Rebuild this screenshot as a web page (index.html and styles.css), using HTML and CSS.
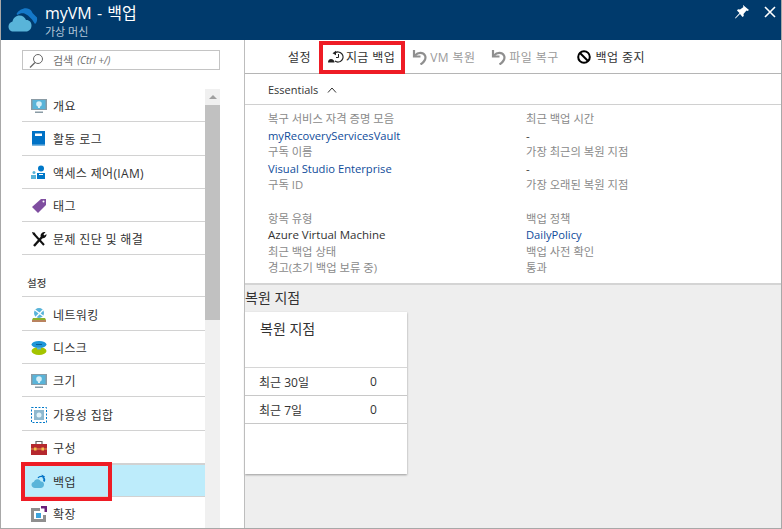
FILE: index.html
```html
<!DOCTYPE html>
<html lang="ko">
<head>
  <meta charset="UTF-8">
  <title>myVM - 백업</title>
  <link rel="stylesheet" href="styles.css">
</head>
<body>
  <div class="app">
    <header class="titlebar">
      <svg class="logo" width="30" height="26" viewBox="0 0 30 26">
        <path d="M8.500 7C11 2.500 17 0 21 2c2 1 3 2.500 3.500 4l4.500 4.500c.5 3-.5 5.500-2 6.500l-3-4.500-4-4-3.500-2c-2.500-.5-5 0-7 1.500z" fill="#1478c8"/>
        <path d="M5.500 24.500C2.500 24.500.5 22.500.5 19.500c0-2.500 1.800-4.500 4-5 .8-3.500 3.500-6 7-6 3 0 5.500 1.800 6.500 4.500 3-.3 5.500 2 5.500 5.500 0 3.500-2.500 6-5.500 6z" fill="#59b4d9"/>
      </svg>
      <div class="title-text">
        <div class="title">myVM - 백업</div>
        <div class="subtitle">가상 머신</div>
      </div>
      <div class="window-btns">
        <svg width="14" height="14" viewBox="0 0 14 14"><path d="M8 0l6 5-1.500 1-1-.5L8.500 9l.3 2-1.300 1-2.500-3-4.500 4.500-.5-.5L4.500 8 2 5.500l1-1.300 2 .3L8.500 2 8 1z" fill="#fff"/></svg>
        <svg width="12" height="12" viewBox="0 0 12 12"><path d="M1 1l10 10M11 1L1 11" stroke="#fff" stroke-width="1.600"/></svg>
      </div>
    </header>

    <div class="main">
      <aside class="sidebar">
        <div class="search">
          <svg width="15" height="15" viewBox="0 0 15 15"><circle cx="9" cy="6" r="4.500" fill="none" stroke="#666" stroke-width="1"/><path d="M6 9.500L1 14.500" stroke="#666" stroke-width="1.200"/></svg>
          <span class="search-ko">검색</span> <em>(Ctrl +/)</em>
        </div>
        <div class="menu-wrap">
          <nav class="menu">
            <div class="item">
              <svg class="ico" viewBox="0 0 16 16"><rect x="0" y="1" width="16" height="11" fill="#8a9ba5"/><rect x="1.500" y="2" width="13" height="9" fill="#59b4d9"/><circle cx="8" cy="6" r="2.800" fill="#d8f0f8"/><rect x="7" y="6" width="2" height="4" fill="#d8f0f8"/><rect x="4" y="13.500" width="8" height="1.500" fill="#8a9ba5"/></svg>
              개요
            </div>
            <div class="item">
              <svg class="ico" viewBox="0 0 16 16"><rect x="1" y="0" width="13" height="15" fill="#0072c6"/><rect x="1" y="13.500" width="13" height="1.500" fill="#7fb8e0"/><rect x="4" y="2.500" width="7" height="2.500" fill="#fff"/></svg>
              활동 로그
            </div>
            <div class="item">
              <svg class="ico" viewBox="0 0 16 16"><circle cx="10" cy="3.500" r="3" fill="#0078c8"/><path d="M6 14V8h8v6z" fill="#0078c8"/><circle cx="3" cy="7.500" r="1.500" fill="#59b4d9"/><path d="M0 14v-4h5v4z" fill="#59b4d9"/><path d="M8 9h4v1H8z" fill="#fff"/></svg>
              액세스 제어(IAM)
            </div>
            <div class="item">
              <svg class="ico" viewBox="0 0 16 16"><path d="M10 1h5v6l-8 8-6-6z" fill="#7f4ea0"/><circle cx="12.500" cy="3.500" r="1" fill="#fff"/></svg>
              태그
            </div>
            <div class="item">
              <svg class="ico" viewBox="0 0 16 16"><path d="M3 15L11 6" stroke="#111" stroke-width="2.400"/><path d="M9.500 5c0-2.500 2-4.500 5-4l-2 2.500 1 1 2-1.500c.3 3-2.500 5-5 4z" fill="#111"/><path d="M3 3l10 11" stroke="#111" stroke-width="2"/><path d="M1 1l3 .8.3 2.200-2.300-.3z" fill="#111"/></svg>
              문제 진단 및 해결
            </div>
            <div class="group-label">설정</div>
            <div class="item">
              <svg class="ico" viewBox="0 0 16 16"><circle cx="8" cy="6" r="5" fill="#59b4d9"/><path d="M4 3l8 6M12 3L5 10" stroke="#fff" stroke-width="1.300"/><path d="M2 11h12l1 2H1z" fill="#8cb42c"/><rect x="1" y="13" width="14" height="2" fill="#b9835f"/></svg>
              네트워킹
            </div>
            <div class="item">
              <svg class="ico" viewBox="0 0 16 16"><ellipse cx="8" cy="11" rx="7.500" ry="4" fill="#a4c400"/><ellipse cx="8" cy="4.500" rx="7.500" ry="3.500" fill="#1e96d8"/><rect x="5" y="4" width="6" height="1" fill="#0b5f94"/><rect x="6" y="7.500" width="4" height="2" fill="#59b4d9"/></svg>
              디스크
            </div>
            <div class="item">
              <svg class="ico" viewBox="0 0 16 16"><rect x="0" y="1" width="16" height="11" fill="#8a9ba5"/><rect x="1.500" y="2" width="13" height="9" fill="#59b4d9"/><circle cx="8" cy="6" r="2.800" fill="#d8f0f8"/><rect x="7" y="6" width="2" height="4" fill="#d8f0f8"/><rect x="4" y="13.500" width="8" height="1.500" fill="#8a9ba5"/></svg>
              크기
            </div>
            <div class="item">
              <svg class="ico" viewBox="0 0 16 16"><rect x=".5" y=".5" width="15" height="15" fill="none" stroke="#0078c8" stroke-dasharray="2 1.500"/><rect x="3" y="3" width="10" height="10" fill="#8fb9cf"/><circle cx="8" cy="8" r="2.500" fill="#e0f2f9"/></svg>
              가용성 집합
            </div>
            <div class="item">
              <svg class="ico" viewBox="0 0 16 16"><path d="M5 4V1.500h6V4" fill="none" stroke="#666" stroke-width="1.200"/><rect x="0" y="4" width="16" height="11" fill="#b5282e"/><rect x="0" y="8.500" width="16" height="1" fill="#e8a04c"/><rect x="3" y="7.500" width="2.500" height="3" fill="#f2c14e"/><rect x="10.500" y="7.500" width="2.500" height="3" fill="#f2c14e"/></svg>
              구성
            </div>
            <div class="item selected">
              <svg class="ico" viewBox="0 0 16 16"><path d="M4 14c-2 0-3.500-1.500-3.500-3.200 0-1.500 1-2.700 2.500-3 .5-1.800 2-2.800 3.800-2.500 1.500.2 2.500 1 3 2.200 1.800-.3 3.200 1 3.200 3 0 2-1.500 3.500-3.200 3.500z" fill="#59b4d9"/><path d="M7 4c1-1.500 2.500-2 4.500-1.500" fill="none" stroke="#0072c6" stroke-width="1.300"/><path d="M10.500 0.500l3.500 2-2 2.500z" fill="#0072c6"/><path d="M13.500 3.500c1 1.500 1 3 0 4.500l-1.500-1c.5-1 .5-1.500 0-2.500z" fill="#0072c6"/></svg>
              백업
            </div>
            <div class="item">
              <svg class="ico" viewBox="0 0 16 16"><path d="M0 2h9v3H3v8h9V9h3v7H0z" fill="#8f8f8f"/><rect x="5" y="7" width="5" height="5" fill="#3da4dc"/><path d="M10 0h6v6h-2.500V2.500H10z" fill="#68217a"/></svg>
              확장
            </div>
          </nav>
          <div class="scrollbar">
            <div class="scroll-btn"></div>
            <div class="scroll-thumb"></div>
          </div>
        </div>
        <div class="redbox redbox-menu"></div>
      </aside>

      <section class="content">
        <div class="toolbar">
          <span class="tool tool-settings">설정</span>
          <span class="tool tool-backup">
            <svg width="16" height="14" viewBox="0 0 16 14"><path d="M7 3a5 5 0 1 1 0 8" fill="none" stroke="#222" stroke-width="1.300"/><path d="M4.500 3.200L8 .8v4.400z" fill="#222"/><path d="M10.500 4v3.500H8" fill="none" stroke="#222"/><path d="M0 12.500c0-2 1.200-3.500 3-3.500s3.500 1.500 3.500 3.500z" fill="#222"/></svg>
            지금 백업
          </span>
          <span class="tool tool-off tool-vm">
            <svg width="16" height="16" viewBox="0 0 16 16"><path d="M2 1v6.500h6.500" fill="none" stroke="#8f8f8f" stroke-width="2.200"/><path d="M3 6.500c3-3.500 8-3.500 10 0 1.500 3-1 7-4.500 9" fill="none" stroke="#8f8f8f" stroke-width="2.200"/></svg>
            VM 복원
          </span>
          <span class="tool tool-off tool-file">
            <svg width="16" height="16" viewBox="0 0 16 16"><path d="M2 1v6.500h6.500" fill="none" stroke="#8f8f8f" stroke-width="2.200"/><path d="M3 6.500c3-3.500 8-3.500 10 0 1.500 3-1 7-4.500 9" fill="none" stroke="#8f8f8f" stroke-width="2.200"/></svg>
            파일 복구
          </span>
          <span class="tool tool-stop">
            <svg width="14" height="14" viewBox="0 0 14 14"><circle cx="7" cy="7" r="5.800" fill="none" stroke="#000" stroke-width="2"/><path d="M3 3l8 8" stroke="#000" stroke-width="2"/></svg>
            백업 중지
          </span>
          <div class="redbox redbox-tool"></div>
        </div>

        <div class="essentials">Essentials
          <svg width="10" height="6" viewBox="0 0 10 6"><path d="M1 5.500L5 1l4 4.500" fill="none" stroke="#333" stroke-width="1"/></svg>
        </div>

        <div class="details">
          <div class="col col-left">
            <div class="label">복구 서비스 자격 증명 모음</div>
            <div class="link">myRecoveryServicesVault</div>
            <div class="label">구독 이름</div>
            <div class="link">Visual Studio Enterprise</div>
            <div class="label">구독 ID</div>
            <div class="blank"></div>
            <div class="label">항목 유형</div>
            <div class="value">Azure Virtual Machine</div>
            <div class="label">최근 백업 상태</div>
            <div class="label">경고(초기 백업 보류 중)</div>
          </div>
          <div class="col col-right">
            <div class="label">최근 백업 시간</div>
            <div class="value">-</div>
            <div class="label">가장 최근의 복원 지점</div>
            <div class="value">-</div>
            <div class="label">가장 오래된 복원 지점</div>
            <div class="blank"></div>
            <div class="label">백업 정책</div>
            <div class="link">DailyPolicy</div>
            <div class="label">백업 사전 확인</div>
            <div class="label">통과</div>
          </div>
        </div>

        <div class="lower">
          <div class="section-title">복원 지점</div>
          <div class="tile">
            <div class="tile-title">복원 지점</div>
            <div class="tile-row"><span class="row-name">최근 30일</span><span>0</span></div>
            <div class="tile-row"><span class="row-name">최근 7일</span><span>0</span></div>
          </div>
        </div>
      </section>
    </div>
  </div>
</body>
</html>
```

FILE: styles.css
```css
* {
  box-sizing: border-box;
}
html, body {
  margin: 0;
  padding: 0;
}
body {
  width: 782px;
  height: 529px;
  overflow: hidden;
  background: #fff;
  font-family: "Open Sans", "Noto Sans CJK KR", sans-serif;
  font-size: 11.5px;
  color: #333;
}
.app {
  width: 782px;
  height: 529px;
  display: flex;
  flex-direction: column;
  border: 1px solid #a8a8a8;
  border-top: 0;
  overflow: hidden;
}

/* title bar */
.titlebar {
  height: 40px;
  flex: none;
  background: #003a6c;
  display: flex;
  align-items: center;
  padding: 0 0 0 7px;
}
.logo {
  margin-right: 7px;
  flex: none;
}
.title-text {
  flex: 1;
  margin-top: 1px;
}
.title {
  color: #fff;
  font-size: 16px;
  line-height: 22px;
  word-spacing: 1px;
}
.subtitle {
  color: #b5c8da;
  font-size: 11px;
  line-height: 15px;
}
.window-btns {
  display: flex;
  align-items: center;
  gap: 15px;
  padding-right: 5px;
  margin-top: -16px;
}

.main {
  flex: 1;
  display: flex;
  min-height: 0;
}

/* left blade menu */
.sidebar {
  width: 244px;
  flex: none;
  position: relative;
  padding: 10px 0 0 21px;
  border-right: 1px solid #bdbdbd;
}
.search {
  width: 198px;
  height: 20px;
  border: 1px solid #c4c4c4;
  display: flex;
  align-items: center;
  padding-left: 6px;
  color: #707070;
  font-size: 11px;
}
.search-ko {
  margin: 0 4px 0 9px;
}
.search em {
  font-size: 10px;
}
.menu-wrap {
  display: flex;
  margin-top: 19px;
}
.menu {
  width: 183px;
}
.item {
  height: 33.3px;
  display: flex;
  align-items: center;
  border-bottom: 1px solid #d2d2d2;
  padding: 2px 0 0 9px;
  color: #333;
  font-size: 12px;
  letter-spacing: .35px;
}
.ico {
  width: 16px;
  height: 16px;
  margin-right: 6px;
  flex: none;
}
.group-label {
  height: 42px;
  padding: 20px 0 0 5px;
  font-size: 10.5px;
  font-weight: 500;
  color: #444;
  border-bottom: 1px solid #d2d2d2;
}
.item.selected {
  background: #bdecfb;
  border-top: 1px solid #d2d2d2;
}
.scrollbar {
  width: 15px;
  background: #f0f0f0;
  height: 440px;
}
.scroll-btn {
  height: 16px;
  position: relative;
}
.scroll-btn::after {
  content: "";
  position: absolute;
  left: 4px;
  top: 6px;
  border: 4px solid transparent;
  border-top: 0;
  border-bottom: 4px solid #a0a0a0;
}
.scroll-thumb {
  height: 215px;
  background: #c1c1c1;
}

/* red annotation boxes */
.redbox {
  position: absolute;
  border: 4px solid #ee1c25;
  pointer-events: none;
}
.redbox-menu {
  left: 20px;
  top: 422px;
  width: 91px;
  height: 39px;
}
.redbox-tool {
  left: 74px;
  top: 1px;
  width: 86px;
  height: 33px;
}

/* right blade */
.content {
  flex: 1;
  display: flex;
  flex-direction: column;
  min-width: 0;
}
.toolbar {
  height: 34px;
  flex: none;
  position: relative;
  display: flex;
  align-items: center;
  border-bottom: 1px solid #b5b5b5;
  font-size: 12px;
  letter-spacing: .4px;
}
.tool {
  display: flex;
  align-items: center;
  gap: 2px;
  color: #333;
  white-space: nowrap;
}
.tool-settings {
  margin-left: 43px;
}
.tool-backup {
  margin-left: 17px;
}
.tool-vm {
  margin-left: 17px;
}
.tool-file {
  margin-left: 16px;
}
.tool-stop {
  margin-left: 18px;
  gap: 5px;
}
.tool-off {
  color: #9a9a9a;
}
.essentials {
  height: 31px;
  flex: none;
  display: flex;
  align-items: center;
  gap: 9px;
  padding: 1px 0 0 23px;
  border-bottom: 1px solid #d0d0d0;
  font-size: 11px;
}
.details {
  height: 178px;
  flex: none;
  display: flex;
  padding: 6px 0 0 23px;
  line-height: 16.6px;
}
.col-left {
  width: 258px;
}
.label {
  color: #8a8a8a;
  font-size: 11.3px;
}
.link {
  color: #0f4c9a;
  font-size: 11.2px;
}
.value {
  color: #333;
}
.blank {
  height: 16.6px;
}

/* lower gray area */
.lower {
  flex: 1;
  background: #eeeeee;
  border-top: 2px solid #d4d4d4;
}
.section-title {
  height: 27px;
  padding: 2px 0 0 0;
  font-size: 14px;
  color: #333;
}
.tile {
  width: 162px;
  height: 162px;
  background: #fff;
  box-shadow: 0 1px 2px #9a9a9a;
}
.tile-title {
  height: 56px;
  padding: 6px 0 0 15px;
  font-size: 14px;
  color: #333;
  border-bottom: 1px solid #d6d6d6;
}
.tile-row {
  height: 28px;
  display: flex;
  align-items: center;
  padding-left: 14px;
  font-size: 12px;
  border-bottom: 1px solid #c8c8c8;
}
.row-name {
  width: 111px;
}
```
